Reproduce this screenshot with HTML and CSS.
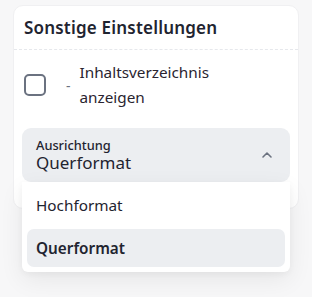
FILE: index.html
```html
<!DOCTYPE html>
<html lang="de">
<head>
<meta charset="utf-8">
<link rel="stylesheet" href="styles.css">
</head>
<body>
<div class="card">
  <div class="card-header">Sonstige Einstellungen</div>
  <div class="card-body">
    <label class="option">
      <span class="checkbox"></span>
      <span class="dash">-</span>
      <span class="option-text">Inhaltsverzeichnis anzeigen</span>
    </label>
    <div class="select-wrap">
      <div class="select">
        <div class="select-values">
          <span class="select-label">Ausrichtung</span>
          <span class="select-value">Querformat</span>
        </div>
        <svg class="chevron" width="14" height="14" viewBox="0 0 14 14"><path d="M3 9 L7 5 L11 9" fill="none" stroke="#6b7280" stroke-width="1.6" stroke-linecap="round" stroke-linejoin="round"/></svg>
      </div>
      <ul class="menu">
        <li class="menu-item">Hochformat</li>
        <li class="menu-item selected">Querformat</li>
      </ul>
    </div>
  </div>
</div>
</body>
</html>
```
FILE: styles.css
```css
html, body {
  margin: 0;
  padding: 0;
}
body {
  background: #f7f7f8;
  font-family: "Noto Sans", "Open Sans", sans-serif;
  color: #1f2430;
  width: 312px;
  height: 297px;
  overflow: hidden;
}
.card {
  margin: 5px 0 0 13px;
  width: 284px;
  height: 202px;
  background: #ffffff;
  border: 1px solid #f0f0f2;
  border-radius: 10px;
}
.card-header {
  height: 44px;
  box-sizing: border-box;
  padding: 10px 0 0 10px;
  font-size: 17px;
  font-weight: 600;
  border-bottom: 1px dashed #e6e8ec;
  letter-spacing: 0.2px;
}
.card-body {
  padding: 9px 8px 0 8px;
}
.option {
  display: flex;
  align-items: center;
  height: 52px;
}
.checkbox {
  width: 18px;
  height: 18px;
  border: 2px solid #6b7280;
  border-radius: 5px;
  margin-left: 2px;
  flex: none;
}
.dash {
  margin: 0 9px 0 20px;
  font-size: 14px;
  color: #6b7280;
}
.option-text {
  font-size: 15.3px;
  line-height: 25px;
  color: #2a2430;
  width: 180px;
}
.select-wrap {
  position: relative;
  margin-top: 17px;
}
.select {
  height: 54px;
  box-sizing: border-box;
  background: #eceef1;
  border-radius: 9px;
  display: flex;
  align-items: center;
  justify-content: space-between;
  padding: 0 16px 0 14px;
}
.select-values {
  display: flex;
  flex-direction: column;
}
.select-label {
  font-size: 12.8px;
  font-weight: 500;
  line-height: 16px;
}
.select-value {
  font-size: 17px;
  line-height: 20px;
}
.menu {
  position: absolute;
  top: 54px;
  left: 0;
  right: 0;
  margin: 0;
  padding: 4px 5px 5px 5px;
  list-style: none;
  background: #ffffff;
  border-radius: 0 0 6px 6px;
  box-shadow: 0 8px 24px rgba(0,0,0,0.07), 0 2px 6px rgba(0,0,0,0.04);
  display: flex;
  flex-direction: column;
  gap: 5px;
}
.menu-item {
  height: 38px;
  line-height: 38px;
  padding-left: 9px;
  font-size: 15.3px;
  border-radius: 7px;
}
.menu-item.selected {
  background: #eceef1;
  font-weight: 600;
}
```
